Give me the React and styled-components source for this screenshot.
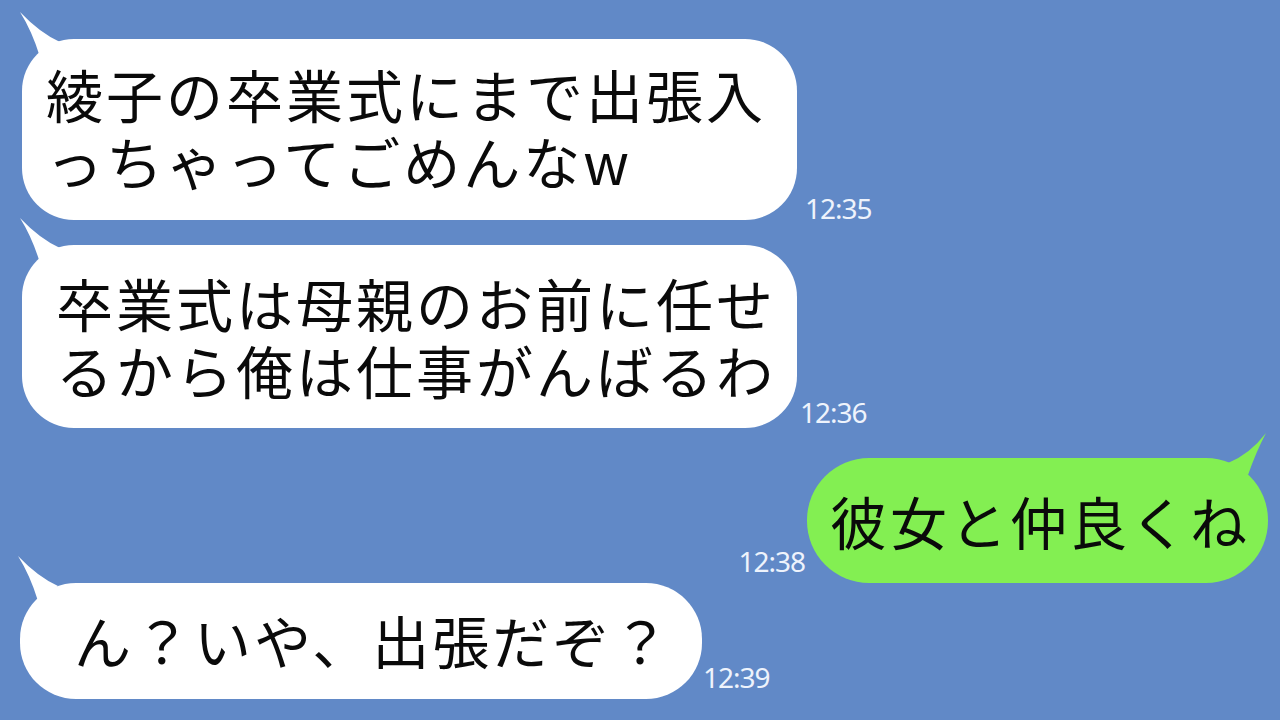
import React from 'react';
import styled, { createGlobalStyle } from 'styled-components';

const GlobalStyle = createGlobalStyle`
  html, body {
    margin: 0;
    padding: 0;
    background: #6189c7;
  }
`;

const Screen = styled.div`
  width: 1280px;
  height: 720px;
  overflow: hidden;
  background: #6189c7;
  display: flex;
  flex-direction: column;
  font-family: "Noto Sans CJK JP", "Noto Sans", sans-serif;
`;

const Row = styled.div`
  display: flex;
  align-items: flex-end;
  justify-content: ${({ $me }) => ($me ? 'flex-end' : 'flex-start')};
  gap: ${({ $gap }) => $gap}px;
  margin-top: ${({ $top }) => $top}px;
  padding-left: ${({ $left }) => $left || 0}px;
  padding-right: ${({ $right }) => $right || 0}px;
`;

const Bubble = styled.div`
  position: relative;
  box-sizing: border-box;
  width: ${({ $w }) => $w}px;
  height: ${({ $h }) => $h}px;
  padding-left: ${({ $pl }) => $pl}px;
  padding-bottom: ${({ $pb }) => $pb || 0}px;
  border-radius: ${({ $r }) => $r || 52}px;
  background: ${({ $me }) => ($me ? '#83ef52' : '#ffffff')};
  display: flex;
  flex-direction: column;
  justify-content: center;
  color: #0a0a0a;
  font-size: 57px;
  letter-spacing: 3px;
  line-height: 67px;
  white-space: nowrap;
`;

// little speech tail sticking out of the top corner
const Tail = styled.svg`
  position: absolute;
  top: -30px;
  ${({ $me }) => ($me ? 'right: 0;' : 'left: -4px;')}
  width: 50px;
  height: 50px;
  overflow: visible;
`;

const Time = styled.span`
  font-family: "Noto Sans", "DejaVu Sans", sans-serif;
  font-size: 28px;
  letter-spacing: -1px;
  line-height: 1;
  color: #eef3fc;
  margin-bottom: ${({ $mb }) => $mb}px;
  white-space: nowrap;
`;

function LeftTail() {
  return (
    <Tail viewBox="0 0 50 50">
      <path d="M2 3 Q22 24 42 33 L22 48 Q14 22 2 3 Z" fill="#ffffff" />
    </Tail>
  );
}

function RightTail() {
  return (
    <Tail $me viewBox="0 0 50 50">
      <path d="M48 5 Q32 26 10 35 L30 47 Q38 24 48 5 Z" fill="#83ef52" />
    </Tail>
  );
}

export default function App() {
  return (
    <>
      <GlobalStyle />
      <Screen>
        <Row $top={39} $left={22} $gap={8}>
          <Bubble $w={775} $h={181} $pl={24} $pb={6}>
            <LeftTail />
            <div>綾子の卒業式にまで出張入</div>
            <div>っちゃってごめんなw</div>
          </Bubble>
          <Time $mb={-2}>12:35</Time>
        </Row>

        <Row $top={25} $left={22} $gap={3}>
          <Bubble $w={775} $h={183} $pl={34} $pb={2}>
            <LeftTail />
            <div>卒業式は母親のお前に任せ</div>
            <div>るから俺は仕事がんばるわ</div>
          </Bubble>
          <Time $mb={2}>12:36</Time>
        </Row>

        <Row $me $top={30} $right={12} $gap={2}>
          <Time $mb={8}>12:38</Time>
          <Bubble $me $w={461} $h={125} $pl={23} $r={62}>
            <RightTail />
            <div>彼女と仲良くね</div>
          </Bubble>
        </Row>

        <Row $top={0} $left={20} $gap={1}>
          <Bubble $w={682} $h={116} $pl={54} $r={56} $pb={4}>
            <LeftTail />
            <div>ん？いや、出張だぞ？</div>
          </Bubble>
          <Time $mb={8}>12:39</Time>
        </Row>
      </Screen>
    </>
  );
}
